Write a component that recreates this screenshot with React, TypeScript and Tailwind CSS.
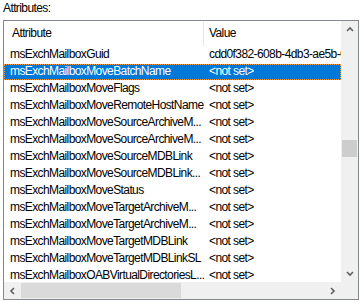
const rows: { name: string; value: string; selected?: boolean }[] = [
  { name: 'msExchMailboxGuid', value: 'cdd0f382-608b-4db3-ae5b-6' },
  { name: 'msExchMailboxMoveBatchName', value: '<not set>', selected: true },
  { name: 'msExchMailboxMoveFlags', value: '<not set>' },
  { name: 'msExchMailboxMoveRemoteHostName', value: '<not set>' },
  { name: 'msExchMailboxMoveSourceArchiveM...', value: '<not set>' },
  { name: 'msExchMailboxMoveSourceArchiveM...', value: '<not set>' },
  { name: 'msExchMailboxMoveSourceMDBLink', value: '<not set>' },
  { name: 'msExchMailboxMoveSourceMDBLink...', value: '<not set>' },
  { name: 'msExchMailboxMoveStatus', value: '<not set>' },
  { name: 'msExchMailboxMoveTargetArchiveM...', value: '<not set>' },
  { name: 'msExchMailboxMoveTargetArchiveM...', value: '<not set>' },
  { name: 'msExchMailboxMoveTargetMDBLink', value: '<not set>' },
  { name: 'msExchMailboxMoveTargetMDBLinkSL', value: '<not set>' },
  { name: 'msExchMailboxOABVirtualDirectoriesL...', value: '<not set>' },
]

function Chevron({ dir }: { dir: 'up' | 'down' | 'left' | 'right' }) {
  const points = {
    up: '1,5 4,2 7,5',
    down: '1,2 4,5 7,2',
    left: '5,1 2,4 5,7',
    right: '2,1 5,4 2,7',
  }[dir]
  return (
    <svg width="8" height="8" viewBox="0 0 8 8">
      <polyline points={points} fill="none" stroke="#606060" strokeWidth="1.6" />
    </svg>
  )
}

export default function App() {
  return (
    <div className="w-[364px] h-[303px] bg-white overflow-hidden font-['Liberation_Sans',Arial,sans-serif] text-[12px] tracking-[-0.6px] text-black">
      <div className="h-[20px] pl-[3px] leading-[16px]">Attributes:</div>

      <div className="ml-[3px] w-[356px] h-[280px] border border-[#828790] flex flex-col">
        <div className="flex h-[261px] shrink-0">
          {/* list area */}
          <div className="w-[337px] overflow-hidden">
            <div className="flex h-[25px]">
              <div className="w-[200px] shrink-0 pl-[8px] border-r border-[#e5e5e5] mt-[1px] leading-[23px]">
                Attribute
              </div>
              <div className="pl-[5px] leading-[25px]">Value</div>
            </div>
            {rows.map((r, i) => (
              <div key={i} className="h-[17px] flex">
                <div
                  className={`flex w-full whitespace-nowrap ${
                    r.selected
                      ? 'bg-[#0078d7] text-white outline-1 outline-dotted outline-[#f39a3c] -outline-offset-1 mt-[1px] h-[16px] leading-[15px]'
                      : 'leading-[17px]'
                  }`}
                >
                  <div className="w-[200px] shrink-0 pl-[6px] overflow-hidden">{r.name}</div>
                  <div className="pl-[5px] overflow-hidden">{r.value}</div>
                </div>
              </div>
            ))}
          </div>

          {/* vertical scrollbar */}
          <div className="w-[17px] bg-[#f0f0f0] flex flex-col">
            <div className="h-[17px] flex items-center justify-center">
              <Chevron dir="up" />
            </div>
            <div className="flex-1">
              <div className="mt-[102px] mx-[1px] h-[17px] bg-[#cdcdcd]" />
            </div>
            <div className="h-[17px] flex items-center justify-center">
              <Chevron dir="down" />
            </div>
          </div>
        </div>

        {/* horizontal scrollbar */}
        <div className="flex flex-1 bg-[#f0f0f0]">
          <div className="w-[17px] flex items-center justify-center">
            <Chevron dir="left" />
          </div>
          <div className="w-[303px] flex items-center">
            <div className="w-[160px] h-[15px] bg-[#dadada]" />
          </div>
          <div className="w-[17px] flex items-center justify-center">
            <Chevron dir="right" />
          </div>
          <div className="flex-1" />
        </div>
      </div>
    </div>
  )
}
